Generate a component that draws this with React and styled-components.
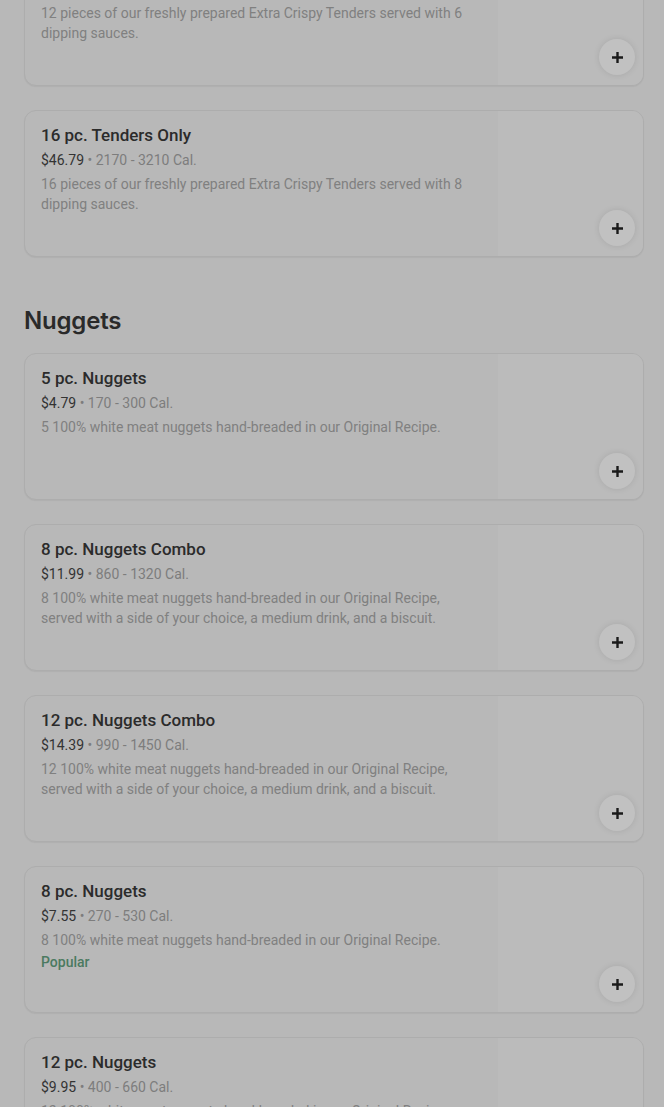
import React from 'react';
import styled, { createGlobalStyle } from 'styled-components';

const GlobalStyle = createGlobalStyle`
  html, body {
    margin: 0;
    padding: 0;
    background: #b8b8b8;
    overflow: hidden;
  }
  body {
    font-family: Roboto, "Liberation Sans", sans-serif;
    -webkit-font-smoothing: antialiased;
  }
`;

const Page = styled.div`
  padding: 0 20px 0 24px;
  margin-top: -61px;
`;

const Section = styled.section`
  display: flex;
  flex-direction: column;
  gap: 24px;
  margin-bottom: 48px;
`;

const SectionTitle = styled.h2`
  margin: 0 0 -8px;
  font-family: Inter, Roboto, sans-serif;
  font-size: 24px;
  line-height: 32px;
  font-weight: 600;
  color: #2a2a2a;
  letter-spacing: -0.2px;
`;

const Card = styled.div`
  display: flex;
  height: 147px;
  box-sizing: border-box;
  border: 1px solid #adadad;
  border-radius: 12px;
  background: #b8b8b8;
  box-shadow: 0 1px 1px rgba(0, 0, 0, 0.05);
  overflow: hidden;
`;

const Info = styled.div`
  flex: 1;
  min-width: 0;
  padding: 12px 16px;
  display: flex;
  flex-direction: column;
`;

const Name = styled.div`
  font-size: 17px;
  line-height: 24px;
  font-weight: 500;
  color: #2b2b2b;
`;

const Meta = styled.div`
  margin-top: 3px;
  font-size: 14px;
  line-height: 20px;
  color: #7d7d7d;
`;

const Price = styled.span`
  color: #333333;
`;

const Desc = styled.div`
  margin-top: 4px;
  font-size: 14px;
  line-height: 20px;
  color: #808080;
  max-width: 440px;
`;

const Tag = styled.div`
  margin-top: 2px;
  font-size: 14px;
  line-height: 20px;
  font-weight: 500;
  color: #4b7a60;
`;

const Thumb = styled.div`
  position: relative;
  width: 145px;
  flex-shrink: 0;
  background: #bbbbbb;
`;

const AddButton = styled.button`
  position: absolute;
  right: 8px;
  bottom: 10px;
  width: 36px;
  height: 36px;
  border: none;
  border-radius: 50%;
  background: #c1c1c1;
  box-shadow: 0 0 6px rgba(0, 0, 0, 0.1);
  display: flex;
  align-items: center;
  justify-content: center;
  padding: 0;
`;

const PlusIcon = () => (
  <svg width="13" height="13" viewBox="0 0 13 13">
    <path d="M6.5 1v11M1 6.5h11" stroke="#1a1a1a" strokeWidth="2.4" />
  </svg>
);

const sections = [
  {
    title: null,
    items: [
      {
        name: '12 pc. Tenders Only',
        price: '$36.79',
        cal: '1630 - 2410 Cal.',
        desc: '12 pieces of our freshly prepared Extra Crispy Tenders served with 6 dipping sauces.',
      },
      {
        name: '16 pc. Tenders Only',
        price: '$46.79',
        cal: '2170 - 3210 Cal.',
        desc: '16 pieces of our freshly prepared Extra Crispy Tenders served with 8 dipping sauces.',
      },
    ],
  },
  {
    title: 'Nuggets',
    items: [
      {
        name: '5 pc. Nuggets',
        price: '$4.79',
        cal: '170 - 300 Cal.',
        desc: '5 100% white meat nuggets hand-breaded in our Original Recipe.',
      },
      {
        name: '8 pc. Nuggets Combo',
        price: '$11.99',
        cal: '860 - 1320 Cal.',
        desc: '8 100% white meat nuggets hand-breaded in our Original Recipe, served with a side of your choice, a medium drink, and a biscuit.',
      },
      {
        name: '12 pc. Nuggets Combo',
        price: '$14.39',
        cal: '990 - 1450 Cal.',
        desc: '12 100% white meat nuggets hand-breaded in our Original Recipe, served with a side of your choice, a medium drink, and a biscuit.',
      },
      {
        name: '8 pc. Nuggets',
        price: '$7.55',
        cal: '270 - 530 Cal.',
        desc: '8 100% white meat nuggets hand-breaded in our Original Recipe.',
        tag: 'Popular',
      },
      {
        name: '12 pc. Nuggets',
        price: '$9.95',
        cal: '400 - 660 Cal.',
        desc: '12 100% white meat nuggets hand-breaded in our Original Recipe.',
      },
    ],
  },
];

function MenuItem({ item }) {
  return (
    <Card>
      <Info>
        <Name>{item.name}</Name>
        <Meta>
          <Price>{item.price}</Price> • {item.cal}
        </Meta>
        <Desc>{item.desc}</Desc>
        {item.tag && <Tag>{item.tag}</Tag>}
      </Info>
      <Thumb>
        <AddButton aria-label="Add">
          <PlusIcon />
        </AddButton>
      </Thumb>
    </Card>
  );
}

export default function App() {
  return (
    <>
      <GlobalStyle />
      <Page>
        {sections.map((s, i) => (
          <Section key={i}>
            {s.title && <SectionTitle>{s.title}</SectionTitle>}
            {s.items.map((item) => (
              <MenuItem key={item.name} item={item} />
            ))}
          </Section>
        ))}
      </Page>
    </>
  );
}
